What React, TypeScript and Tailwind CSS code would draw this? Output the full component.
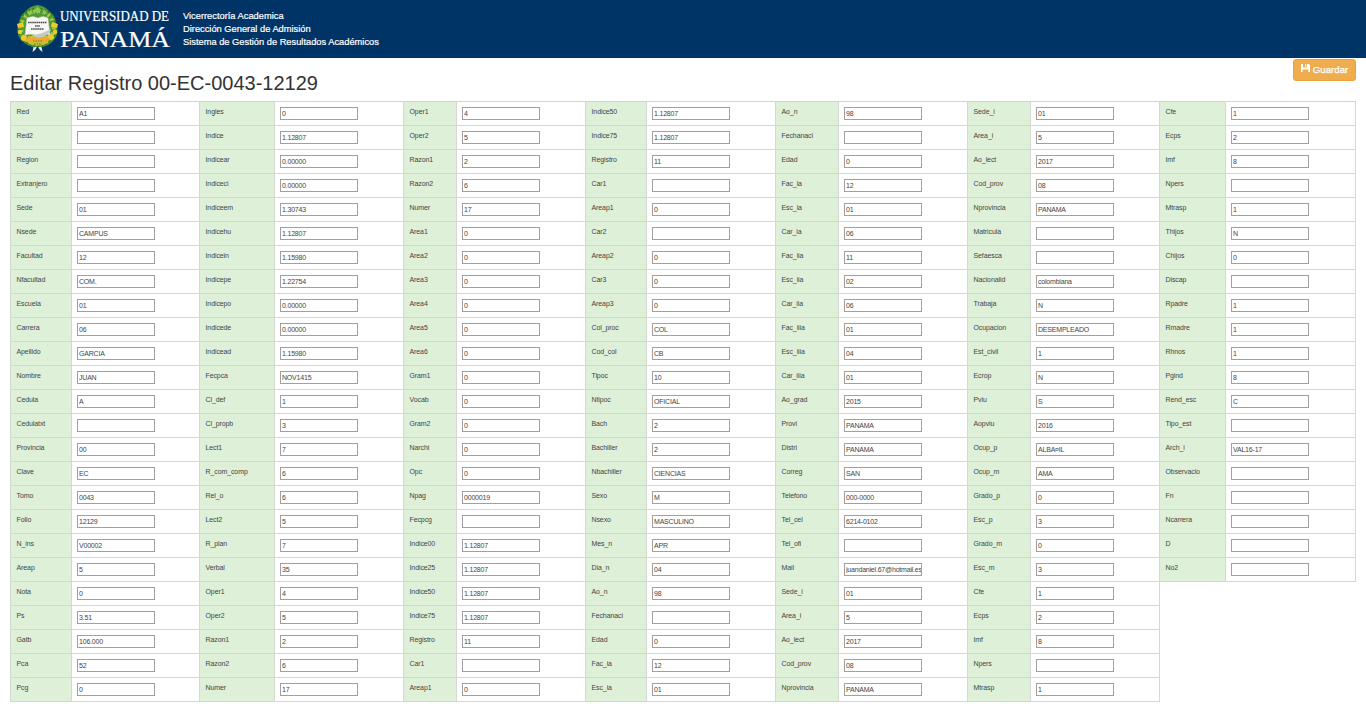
import React from "react";

type Field = [label: string, value: string];

interface Column {
  labelWidth: string;
  fieldWidth: string;
  fields: Field[];
}

const parse = (source: string): Field[] =>
  source
    .trim()
    .split("\n")
    .map((line) => {
      const [label, value = ""] = line.trim().split("|");
      return [label, value];
    });

const columns: Column[] = [
  {
    labelWidth: "w-[61px]",
    fieldWidth: "w-[128px]",
    fields: parse(`Red|A1
      Red2|
      Region|
      Extranjero|
      Sede|01
      Nsede|CAMPUS
      Facultad|12
      Nfacultad|COM.
      Escuela|01
      Carrera|06
      Apellido|GARCIA
      Nombre|JUAN
      Cedula|A
      Cedulatxt|
      Provincia|00
      Clave|EC
      Tomo|0043
      Folio|12129
      N_ins|V00002
      Areap|5
      Nota|0
      Ps|3.51
      Gatb|106.000
      Pca|52
      Pcg|0`),
  },
  {
    labelWidth: "w-[75px]",
    fieldWidth: "w-[129px]",
    fields: parse(`Ingles|0
      Indice|1.12807
      Indicear|0.00000
      Indiceci|0.00000
      Indiceem|1.30743
      Indicehu|1.12807
      Indicein|1.15980
      Indicepe|1.22754
      Indicepo|0.00000
      Indicede|0.00000
      Indicead|1.15980
      Fecpca|NOV1415
      Cl_def|1
      Cl_propb|3
      Lect1|7
      R_com_comp|6
      Rel_o|6
      Lect2|5
      R_plan|7
      Verbal|35
      Oper1|4
      Oper2|5
      Razon1|2
      Razon2|6
      Numer|17`),
  },
  {
    labelWidth: "w-[53px]",
    fieldWidth: "w-[129px]",
    fields: parse(`Oper1|4
      Oper2|5
      Razon1|2
      Razon2|6
      Numer|17
      Area1|0
      Area2|0
      Area3|0
      Area4|0
      Area5|0
      Area6|0
      Gram1|0
      Vocab|0
      Gram2|0
      Narchi|0
      Opc|0
      Npag|0000019
      Fecpcg|
      Indice00|1.12807
      Indice25|1.12807
      Indice50|1.12807
      Indice75|1.12807
      Registro|11
      Car1|
      Areap1|0`),
  },
  {
    labelWidth: "w-[61px]",
    fieldWidth: "w-[129px]",
    fields: parse(`Indice50|1.12807
      Indice75|1.12807
      Registro|11
      Car1|
      Areap1|0
      Car2|
      Areap2|0
      Car3|0
      Areap3|0
      Col_proc|COL
      Cod_col|CB
      Tipoc|10
      Ntipoc|OFICIAL
      Bach|2
      Bachiller|2
      Nbachiller|CIENCIAS
      Sexo|M
      Nsexo|MASCULINO
      Mes_n|APR
      Dia_n|04
      Ao_n|98
      Fechanaci|
      Edad|0
      Fac_ia|12
      Esc_ia|01`),
  },
  {
    labelWidth: "w-[63px]",
    fieldWidth: "w-[129px]",
    fields: parse(`Ao_n|98
      Fechanaci|
      Edad|0
      Fac_ia|12
      Esc_ia|01
      Car_ia|06
      Fac_iia|11
      Esc_iia|02
      Car_iia|06
      Fac_iiia|01
      Esc_iiia|04
      Car_iiia|01
      Ao_grad|2015
      Provi|PANAMA
      Distri|PANAMA
      Correg|SAN
      Telefono|000-0000
      Tel_cel|6214-0102
      Tel_ofi|
      Mail|juandaniel.67@hotmail.es
      Sede_i|01
      Area_i|5
      Ao_lect|2017
      Cod_prov|08
      Nprovincia|PANAMA`),
  },
  {
    labelWidth: "w-[63px]",
    fieldWidth: "w-[129px]",
    fields: parse(`Sede_i|01
      Area_i|5
      Ao_lect|2017
      Cod_prov|08
      Nprovincia|PANAMA
      Matricula|
      Sefaesca|
      Nacionalid|colombiana
      Trabaja|N
      Ocupacion|DESEMPLEADO
      Est_civil|1
      Ecrop|N
      Pviu|S
      Aopviu|2016
      Ocup_p|ALBA¤IL
      Ocup_m|AMA
      Grado_p|0
      Esc_p|3
      Grado_m|0
      Esc_m|3
      Cfe|1
      Ecps|2
      Imf|8
      Npers|
      Mtrasp|1`),
  },
  {
    labelWidth: "w-[66px]",
    fieldWidth: "w-[130px]",
    fields: parse(`Cfe|1
      Ecps|2
      Imf|8
      Npers|
      Mtrasp|1
      Thijos|N
      Chijos|0
      Discap|
      Rpadre|1
      Rmadre|1
      Rhnos|1
      Pgind|8
      Rend_esc|C
      Tipo_est|
      Arch_i|VAL16-17
      Observacio|
      Fn|
      Ncarrera|
      D|
      No2|`),
  },
];

function Logo() {
  return (
    <svg className="block h-[58px] w-[160px] shrink-0 overflow-visible" viewBox="14 0 160 58" role="img">
      <path d="M34 44 32.5 52 35 50 37.5 46 40 50 42.5 52 41 44Z" fill="#e9efe4" />
      <path d="M37.500 5Q45 6 49 11 56 16 56 24 60 32 54 40 47 48 38 47 29 48 21 40 15 32 19 24 19 16 26 11 30 6 37.500 5Z" fill="#4f9a35" />
      <circle cx="37.5" cy="27.500" r="16.500" fill="none" stroke="#a9cc45" strokeWidth="4" strokeDasharray="2 3.200" />
      <circle cx="37.5" cy="27.500" r="19" fill="none" stroke="#28752c" strokeWidth="1.600" strokeDasharray="1.500 2.500" />
      <path d="M37.500 6.500 34 10 37.500 14 41 10ZM31 9 28 14 33 14ZM44 9 42 14 47 14Z" fill="#8cc653" />
      <g fill="#edcb2e">
        <path d="M17 24 23 22 24 27 18 28Z" />
        <path d="M58 24 52 22 51 27 57 28Z" />
        <circle cx="20" cy="32" r="2.2" />
        <circle cx="24" cy="38" r="3" />
        <circle cx="55" cy="32" r="2.2" />
        <circle cx="51" cy="37" r="3" />
      </g>
      <path d="M28 36H48V43Q38 48 28 43Z" fill="#c9bd3c" />
      <path d="M25 38Q38 35 50 38L48 42Q38 40 27 42Z" fill="#f1a92c" />
      <path d="M27 18Q33 15 38 18 43 15 48 18L50 35Q43 33 38 36 32 33 25 35Z" fill="#f7f8f5" stroke="#c9cdc8" strokeWidth=".5" />
      <path d="M31 35Q40 35 51 29 50 36 38 38Z" fill="#c5c9c3" />
      <path d="M28 22.500H47M35 26H40M31 29H44" stroke="#4a4a4a" strokeWidth="1.3" strokeDasharray="1.6 .5" />
      <path d="M33 41H43M34 44H42" stroke="#6b7a22" strokeDasharray="1.5 1" />
      <g fill="#fff" stroke="#fff" strokeWidth=".2" fontFamily="Liberation Serif, serif">
        <text x="60" y="21" fontSize="14.5" textLength="109" lengthAdjust="spacingAndGlyphs">
          UNIVERSIDAD DE
        </text>
        <text x="60" y="46.5" fontSize="24" textLength="110" lengthAdjust="spacingAndGlyphs">
          PANAMÁ
        </text>
      </g>
    </svg>
  );
}

function SaveIcon() {
  return (
    <svg className="-mt-[3px] size-[9px]" viewBox="0 0 9 9">
      <path d="M0 0H2V3.6H6V0H7.8L9 1.2V8H7.400V5.4H1.600V8H0ZM4.1 0H5.3V2.8H4.1Z" fill="#fff" />
    </svg>
  );
}

function FieldColumn({ column }: { column: Column }) {
  return (
    <div className="border-t border-[#d3d3d3]">
      {column.fields.map(([label, value], row) => (
        <div key={row} className="flex h-6">
          <div
            className={`${column.labelWidth} shrink-0 border-r border-b border-[#d3d8d1] bg-[#dff0d8] pt-1 pl-[5.500px] text-[7px] leading-[11px] tracking-[-0.1px] text-[#444]`}
          >
            {label}
          </div>
          <div className={`${column.fieldWidth} shrink-0 border-r border-b border-[#d6d6d6] pt-[5px] pl-[5px]`}>
            <input
              type="text"
              aria-label={label}
              defaultValue={value}
              className="block h-[13px] w-[78px] rounded-none border border-[#a0a0a0] bg-white py-0 pr-0 pl-px text-[7px] leading-[11px] tracking-[-0.2px] text-[#444] outline-none"
            />
          </div>
        </div>
      ))}
    </div>
  );
}

export default function App() {
  return (
    <div className="h-[724px] w-[1366px] overflow-hidden bg-white font-['Liberation_Sans',Arial,sans-serif] text-[#333]">
      <header className="flex h-[58px] bg-[#003366] pl-[14px]">
        <Logo />
        <div className="pt-[10px] pl-[9px] text-[9.3px] leading-[13px] whitespace-nowrap text-white [-webkit-text-stroke:0.2px_white]">
          <p>Vicerrectoría Academica</p>
          <p>Dirección General de Admisión</p>
          <p>Sistema de Gestión de Resultados Académicos</p>
        </div>
      </header>
      <main className="px-[10px]">
        <div className="flex h-[43px] justify-between">
          <h1 className="pt-[13px] text-[20px] leading-6 whitespace-nowrap">Editar Registro 00-EC-0043-12129</h1>
          <button
            type="button"
            className="mt-px flex h-[22px] w-[63px] items-center justify-center gap-[3px] rounded-[3px] border border-[#eea236] bg-[#f0ad4e] pb-px text-[9.700px] leading-none text-white [-webkit-text-stroke:0.25px_white]"
          >
            <SaveIcon />
            Guardar
          </button>
        </div>
        <form className="flex items-start">
          <div className="h-[601px] w-px shrink-0 bg-[#d3d8d1]" />
          {columns.map((column, i) => (
            <FieldColumn key={i} column={column} />
          ))}
        </form>
      </main>
    </div>
  );
}
